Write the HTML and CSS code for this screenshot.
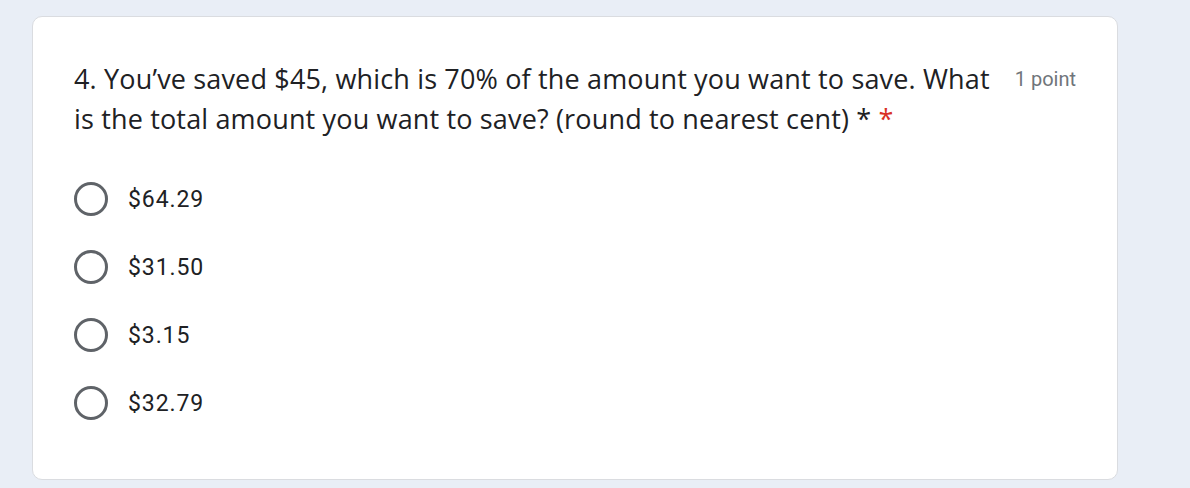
FILE: index.html
```html
<!DOCTYPE html>
<html>
<head>
<meta charset="utf-8">
<link rel="stylesheet" href="styles.css">
</head>
<body>
<div class="page">
  <div class="card">
    <div class="header">
      <div class="title">4. You’ve saved $45, which is 70% of the amount you want to save. What is the total amount you want to save? (round to nearest cent) * <span class="req">*</span></div>
      <div class="points">1 point</div>
    </div>
    <div class="options">
      <label class="option"><span class="radio"></span><span class="opt-text">$64.29</span></label>
      <label class="option"><span class="radio"></span><span class="opt-text">$31.50</span></label>
      <label class="option"><span class="radio"></span><span class="opt-text">$3.15</span></label>
      <label class="option"><span class="radio"></span><span class="opt-text">$32.79</span></label>
    </div>
  </div>
</div>
</body>
</html>
```
FILE: styles.css
```css
html, body {
  margin: 0;
  padding: 0;
  background: #e9eef6;
  height: 100%;
}
.page {
  padding: 16px 72px 0 32px;
  font-family: Roboto, "Liberation Sans", sans-serif;
}
.card {
  box-sizing: border-box;
  width: 1086px;
  height: 464px;
  background: #fff;
  border: 1px solid #dadce0;
  border-radius: 10px;
  padding: 42px 41px 0 41px;
}
.header {
  display: flex;
  align-items: flex-start;
}
.title {
  flex: 1;
  font-family: "Open Sans", Roboto, sans-serif;
  font-size: 27px;
  letter-spacing: 0.16px;
  line-height: 40px;
  color: #202124;
}
.req {
  color: #d93025;
}
.points {
  margin-left: 8px;
  font-size: 20px;
  line-height: 40px;
  color: #70757a;
  white-space: nowrap;
}
.options {
  margin-top: 26px;
  display: flex;
  flex-direction: column;
}
.option {
  display: flex;
  align-items: center;
  height: 68px;
}
.radio {
  box-sizing: border-box;
  width: 34px;
  height: 34px;
  border: 3px solid #5f6368;
  border-radius: 50%;
  flex: none;
}
.opt-text {
  margin-left: 20px;
  font-size: 23px;
  letter-spacing: 0.9px;
  color: #202124;
}
```
